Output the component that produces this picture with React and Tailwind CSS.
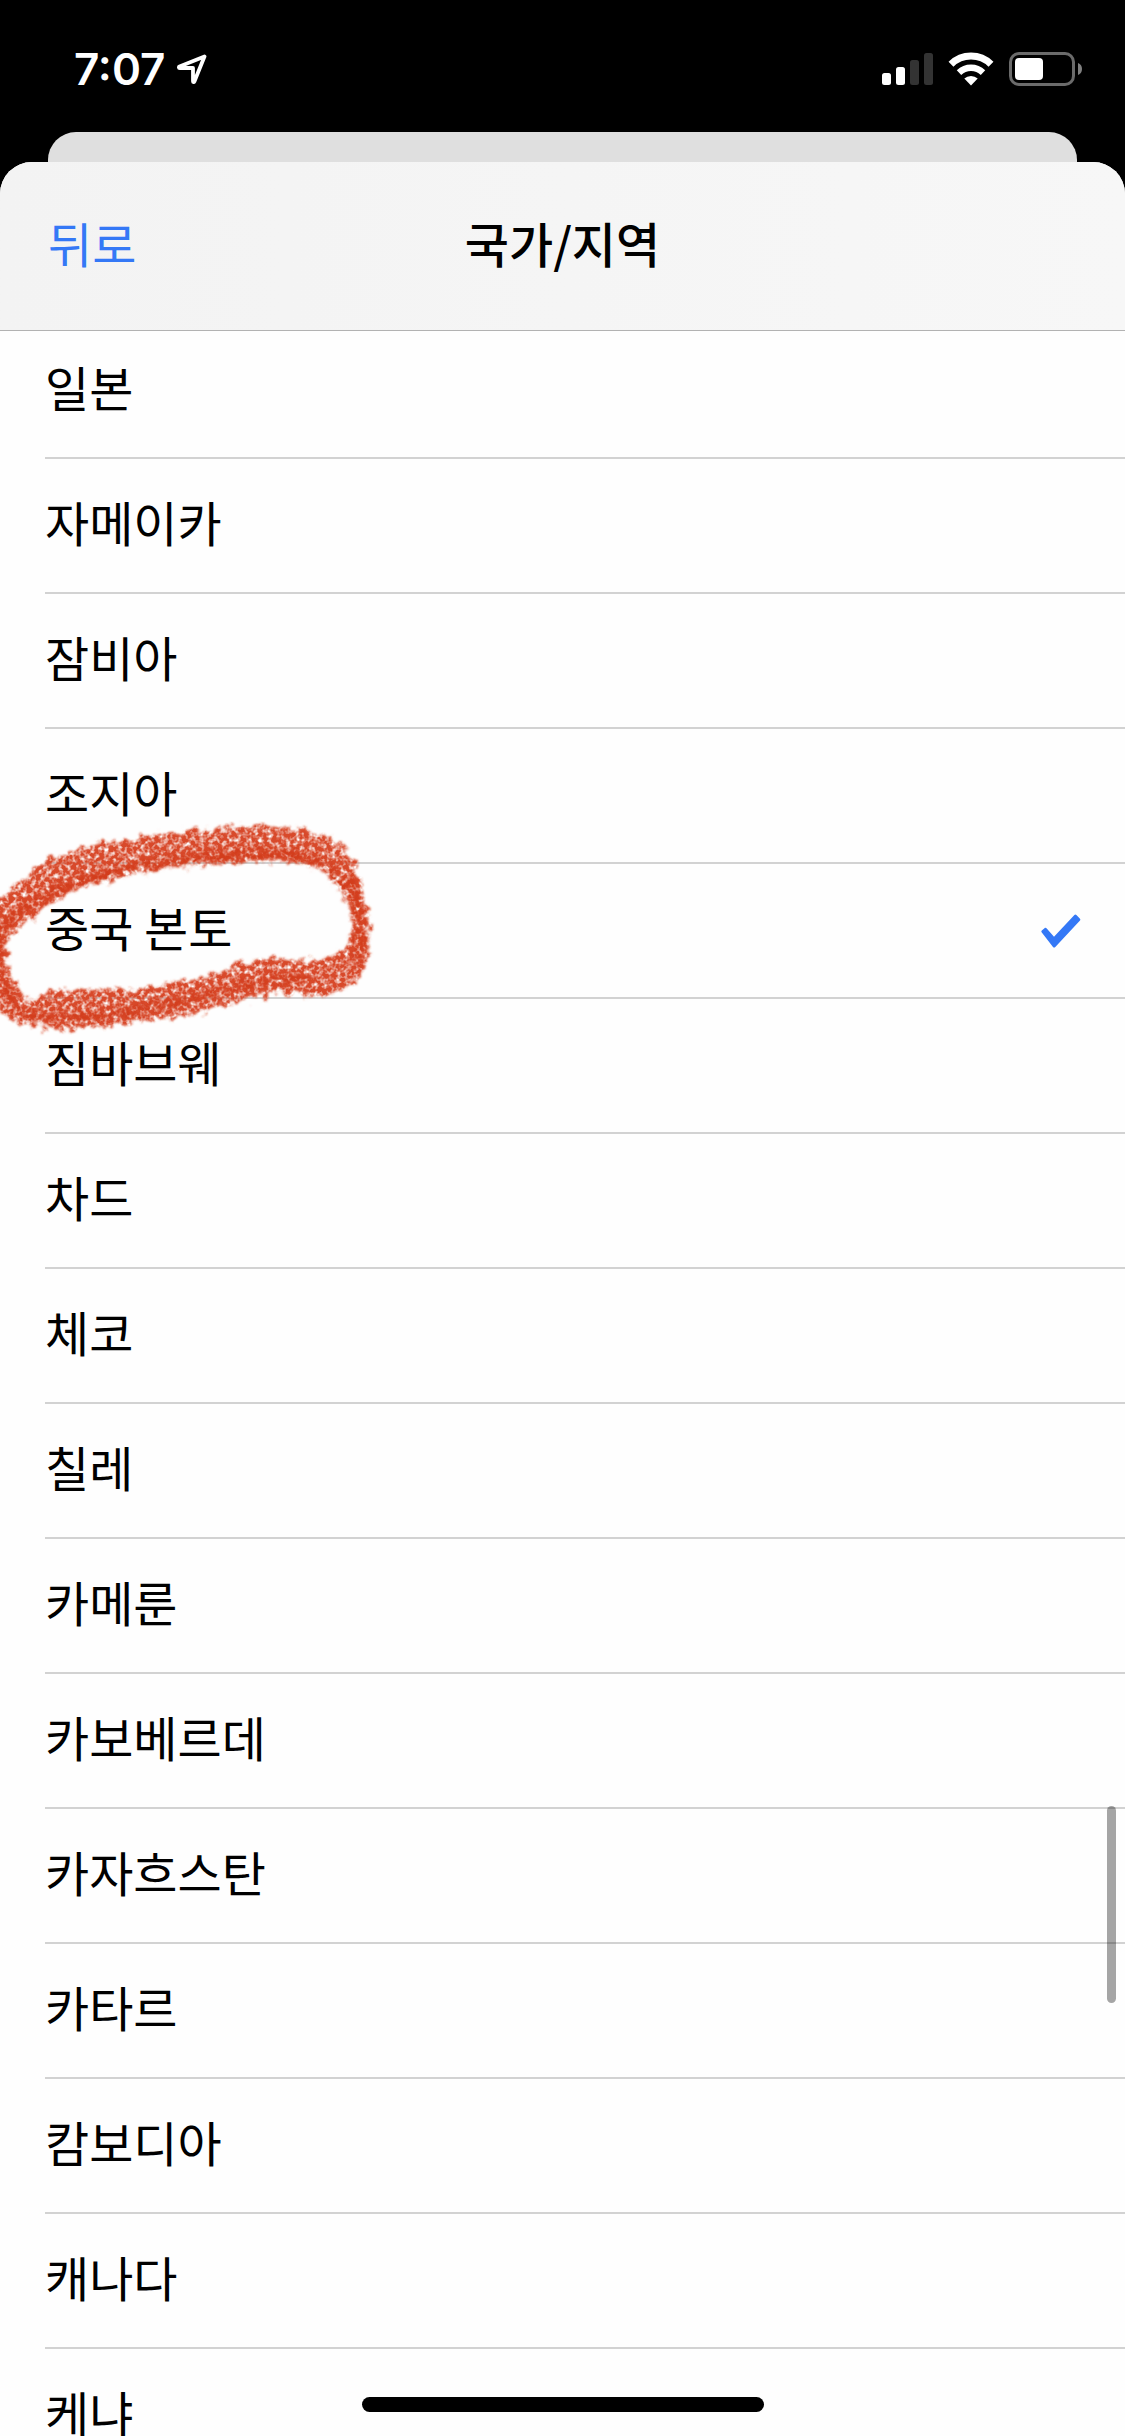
import { useState } from 'react'

const COUNTRIES = [
  '일본',
  '자메이카',
  '잠비아',
  '조지아',
  '중국 본토',
  '짐바브웨',
  '차드',
  '체코',
  '칠레',
  '카메룬',
  '카보베르데',
  '카자흐스탄',
  '카타르',
  '캄보디아',
  '캐나다',
  '케냐',
]

const CIRCLED = '중국 본토'

function StatusBar() {
  return (
    <div className="flex h-[132px] shrink-0 items-start justify-between pl-[74px] pr-[43px] pt-[42px] text-white">
      <div className="flex items-center gap-3">
        <span className="font-['Inter',sans-serif] text-[44px] font-semibold leading-[54px]">7:07</span>
        <svg className="h-[30px] w-[30px]" viewBox="0 0 30 30" fill="none" aria-hidden>
          <path
            d="M27.5 2.5 2.5 12.6c-.9.4-.8 1.4.2 1.4H16v13.3c0 1 1 1.1 1.4.2z"
            stroke="currentColor"
            strokeWidth="3.8"
            strokeLinejoin="round"
          />
        </svg>
      </div>
      <div className="flex h-[54px] items-center gap-[15px]">
        <svg className="h-8 w-[52px]" viewBox="0 0 52 32" fill="currentColor" aria-hidden>
          <rect x="1" y="20" width="9" height="12" rx="2.5" />
          <rect x="15" y="14" width="9" height="18" rx="2.5" />
          <rect x="29" y="7" width="9" height="25" rx="2.5" fill="#333" />
          <rect x="43" y="0" width="9" height="32" rx="2.5" fill="#333" />
        </svg>
        <svg className="h-[34px] w-[46px]" viewBox="0 0 46 34" fill="none" aria-hidden>
          <path d="M3 12.2a28.5 28.5 0 0 1 40 0" stroke="currentColor" strokeWidth="7" />
          <path d="M11 20.6a17.5 17.5 0 0 1 24 0" stroke="currentColor" strokeWidth="6.5" />
          <path d="M23 33.5 16.3 26.6a10 10 0 0 1 13.4 0z" fill="currentColor" />
        </svg>
        <svg className="h-[34px] w-[73px]" viewBox="0 0 73 34" aria-hidden>
          <rect x="1.5" y="1.5" width="63" height="31" rx="8.5" fill="none" stroke="#6b6b6b" strokeWidth="3" />
          <rect x="6" y="6" width="28" height="22" rx="4" fill="currentColor" />
          <path d="M69 11c2.6 1 4 3.2 4 6s-1.4 5-4 6z" fill="#808080" />
        </svg>
      </div>
    </div>
  )
}

// Crayon loop: a wobbly ring, roughened and speckled with noise.
function CrayonCircle() {
  const ring =
    'M-12 92C8 70 18 62 30 54C42 41 56 35 75 30C98 22 118 20 140 17C180 10 230 6 275 6C298 8 312 11 325 15C338 21 345 28 353 41C361 57 365 73 367 92C369 112 369 128 366 142C363 152 358 158 353 162C343 171 333 176 323 177C305 176 285 172 270 174C245 179 220 188 200 192C178 197 155 200 130 203C100 208 70 209 50 208C26 206 12 200 0 190L-12 170Z' +
    'M7 120C20 108 28 98 40 91C66 73 90 61 122 54C155 46 192 44 222 43C250 40 275 40 300 43C322 45 338 53 344 66C352 82 354 98 353 112C352 117 350 121 347 124C338 132 330 138 320 141C300 140 278 137 257 140C238 143 222 149 207 154C197 158 187 160 177 161C167 164 157 167 147 168C138 169 130 169 123 169C98 169 70 169 50 171C40 175 36 183 32 184C26 180 22 173 20 170C8 154 4 138 7 120Z'
  return (
    <svg
      className="pointer-events-none absolute -top-[44px] left-0 z-10 h-[230px] w-[390px]"
      viewBox="0 0 390 230"
      aria-hidden
    >
      <defs>
        <filter id="grain" x="-5%" y="-5%" width="110%" height="110%">
          <feTurbulence type="fractalNoise" baseFrequency="0.13" numOctaves="3" seed="4" result="rough" />
          <feDisplacementMap in="SourceGraphic" in2="rough" scale="17" xChannelSelector="R" yChannelSelector="G" result="moved" />
          <feGaussianBlur in="moved" stdDeviation="0.9" result="edge" />
          <feTurbulence type="fractalNoise" baseFrequency="0.22" numOctaves="2" seed="11" result="dots" />
          <feColorMatrix in="dots" type="matrix" values="0 0 0 0 0  0 0 0 0 0  0 0 0 0 0  0 2.4 0 0 -0.4" result="holes" />
          <feComposite in="edge" in2="holes" operator="in" />
        </filter>
        <filter id="core" x="-5%" y="-5%" width="110%" height="110%">
          <feTurbulence type="fractalNoise" baseFrequency="0.14" numOctaves="2" seed="7" result="rough" />
          <feDisplacementMap in="SourceGraphic" in2="rough" scale="16" xChannelSelector="R" yChannelSelector="G" result="moved" />
          <feGaussianBlur in="moved" stdDeviation="1.5" result="edge" />
          <feTurbulence type="fractalNoise" baseFrequency="0.2" numOctaves="2" seed="21" result="dots" />
          <feColorMatrix in="dots" type="matrix" values="0 0 0 0 0  0 0 0 0 0  0 0 0 0 0  0 3 0 0 -0.9" result="holes" />
          <feComposite in="edge" in2="holes" operator="in" />
        </filter>
      </defs>
      <path d={ring} fill="#d84a2b" fillRule="evenodd" filter="url(#grain)" />
      <g fill="none" stroke="#d33c1e" strokeLinecap="round" strokeLinejoin="round" filter="url(#core)">
        <path d="M0 108C30 82 60 66 100 56C150 42 230 32 290 34C320 38 340 54 350 74" strokeWidth="12" />
        <path d="M350 64C360 90 364 120 358 138" strokeWidth="13" />
        <path d="M0 112C-2 145 2 172 20 192C60 202 110 196 150 188C200 178 250 158 310 158" strokeWidth="10" />
      </g>
    </svg>
  )
}

function CountryRow({ name, selected, onSelect }) {
  return (
    <li className="relative pl-[45px]">
      <button
        type="button"
        aria-pressed={selected}
        onClick={onSelect}
        className="flex h-[135px] w-full items-center justify-between border-b-2 border-[#d2d2d2] pr-11 text-left"
      >
        <span className="pb-2.5">{name}</span>
        {selected && (
          <svg className="h-[34px] w-10" viewBox="0 0 40 34" fill="#3478f6" aria-hidden>
            <path d="M.8 18.5c-.6-.7-.6-1.3 0-1.9l2.7-2.4c.7-.6 1.4-.5 2 .1L13 22.8 33.4 1c.6-.7 1.3-.7 2 0l3.6 3.7c.5.6.5 1.2 0 1.8L14.3 32.9c-.7.8-1.6.8-2.3 0z" />
          </svg>
        )}
      </button>
      {name === CIRCLED && <CrayonCircle />}
    </li>
  )
}

export default function App() {
  const [selected, setSelected] = useState('중국 본토')

  return (
    <div className="relative flex h-screen flex-col overflow-hidden bg-black font-['Noto_Sans_CJK_KR',sans-serif] text-[48px] leading-[72px] text-black">
      <StatusBar />
      <div className="mx-12 h-[30px] shrink-0 rounded-t-[28px] bg-[#dfdfdf]" />

      <main className="flex min-h-0 flex-1 flex-col overflow-hidden rounded-t-[32px] bg-[#fefefe]">
        <header className="relative z-20 grid h-[169px] shrink-0 grid-cols-[1fr_auto_1fr] items-center border-b border-[#b2b2b2] bg-gradient-to-r from-[#f3f3f3] to-[#f7f7f7] px-12 pb-2">
          <button type="button" className="justify-self-start text-[#3478f6]">
            뒤로
          </button>
          <h1 className="font-medium">국가/지역</h1>
        </header>

        <ul className="-mt-[7px] min-h-0 flex-1 overflow-hidden">
          {COUNTRIES.map((name) => (
            <CountryRow
              key={name}
              name={name}
              selected={name === selected}
              onSelect={() => setSelected(name)}
            />
          ))}
        </ul>
      </main>

      {/* Scroll indicator and home bar float over the list */}
      <div className="absolute right-[9px] top-[1806px] h-[197px] w-[9px] rounded-full bg-black/35" />
      <div className="absolute bottom-6 left-1/2 h-[15px] w-[402px] -translate-x-1/2 rounded-full bg-black" />
    </div>
  )
}
